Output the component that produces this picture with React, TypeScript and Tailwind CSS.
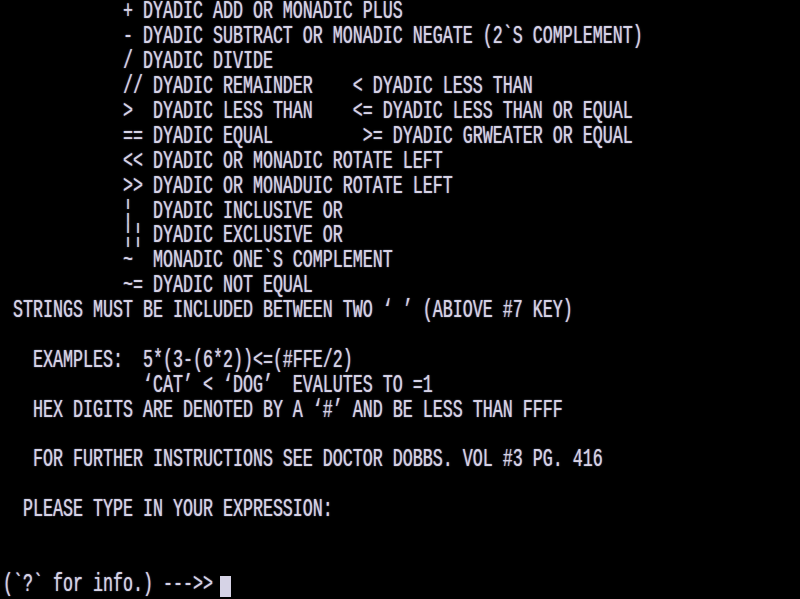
const lines = [
  "            + DYADIC ADD OR MONADIC PLUS",
  "            - DYADIC SUBTRACT OR MONADIC NEGATE (2`S COMPLEMENT)",
  "            / DYADIC DIVIDE",
  "            // DYADIC REMAINDER    < DYADIC LESS THAN",
  "            >  DYADIC LESS THAN    <= DYADIC LESS THAN OR EQUAL",
  "            == DYADIC EQUAL         >= DYADIC GRWEATER OR EQUAL",
  "            << DYADIC OR MONADIC ROTATE LEFT",
  "            >> DYADIC OR MONADUIC ROTATE LEFT",
  "            ¦  DYADIC INCLUSIVE OR",
  "            ¦¦ DYADIC EXCLUSIVE OR",
  "            ~  MONADIC ONE`S COMPLEMENT",
  "            ~= DYADIC NOT EQUAL",
  " STRINGS MUST BE INCLUDED BETWEEN TWO ‘ ’ (ABIOVE #7 KEY)",
  "",
  "   EXAMPLES:  5*(3-(6*2))<=(#FFE/2)",
  "              ‘CAT’ < ‘DOG’  EVALUTES TO =1",
  "   HEX DIGITS ARE DENOTED BY A ‘#’ AND BE LESS THAN FFFF",
  "",
  "   FOR FURTHER INSTRUCTIONS SEE DOCTOR DOBBS. VOL #3 PG. 416",
  "",
  "  PLEASE TYPE IN YOUR EXPRESSION:",
  "",
  "",
]

const Line = ({ text }: { text: string }) => {
  return (
    <div className="h-[24.9px] flex items-center whitespace-pre">
      <span className="inline-block leading-[16px] origin-center scale-y-[1.55]">{text || " "}</span>
    </div>
  )
}

export default function App() {
  return (
    <div className="w-[800px] h-[599px] overflow-hidden bg-black text-[#d6d3e6] font-['Liberation_Mono',monospace] text-[16.67px] [text-shadow:0_0_1px_#a9a6c0]">
      <div className="flex flex-col pl-[3px] pt-[0px]">
        {lines.map((l, i) => (
          <Line key={i} text={l} />
        ))}
        <div className="h-[24.9px] flex items-center whitespace-pre">
          <span className="inline-block leading-[16px] origin-center scale-y-[1.55]">{"(`?` for info.) --->> "}</span>
          <span className="inline-block w-[11px] h-[21px] bg-[#d6d3e6] -ml-[3px] mt-[3px]" />
        </div>
      </div>
    </div>
  )
}
